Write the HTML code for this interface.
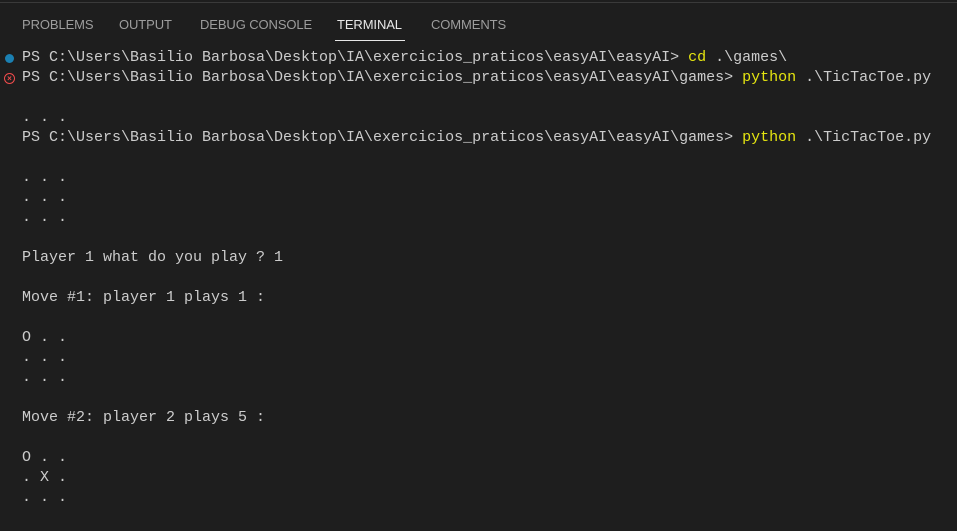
<!DOCTYPE html>
<html><head><style>
html,body{margin:0;padding:0;background:#1e1e1e;width:957px;height:531px;overflow:hidden}
.top{position:absolute;left:0;top:0;width:957px;height:2px;background:#1e1e1e;border-bottom:1px solid #3a3a3a}
.tabs{position:absolute;top:17px;left:22px;font-family:"Liberation Sans",sans-serif;font-size:13px;color:#9d9d9d;letter-spacing:-0.1px}
.tabs span{position:absolute;white-space:nowrap}
.ul{position:absolute;left:335px;top:40px;width:70px;height:1px;background:#e7e7e7}
.term{position:absolute;left:22px;top:48px;font-family:"Liberation Mono",monospace;font-size:15px;line-height:20px;color:#cccccc;white-space:pre}
.y{color:#e5e510}
.dot{position:absolute;left:5px;top:54px;width:9px;height:9px;border-radius:50%;background:#1b80b2}
.err{position:absolute;left:4px;top:73px;width:9px;height:9px;border-radius:50%;border:1px solid #f14c4c;color:#f14c4c;font:bold 8px/9px "Liberation Sans",sans-serif;text-align:center}
</style></head><body>
<div class="top"></div>
<div class="tabs">
<span style="left:0">PROBLEMS</span>
<span style="left:97px">OUTPUT</span>
<span style="left:178px">DEBUG CONSOLE</span>
<span style="left:315px;color:#e7e7e7">TERMINAL</span>
<span style="left:409px">COMMENTS</span>
</div>
<div class="ul"></div>
<div class="dot"></div>
<div class="err">×</div>
<div class="term">PS C:\Users\Basilio Barbosa\Desktop\IA\exercicios_praticos\easyAI\easyAI&gt; <span class="y">cd</span> .\games\
PS C:\Users\Basilio Barbosa\Desktop\IA\exercicios_praticos\easyAI\easyAI\games&gt; <span class="y">python</span> .\TicTacToe.py

. . .
PS C:\Users\Basilio Barbosa\Desktop\IA\exercicios_praticos\easyAI\easyAI\games&gt; <span class="y">python</span> .\TicTacToe.py

. . .
. . .
. . .

Player 1 what do you play ? 1

Move #1: player 1 plays 1 :

O . .
. . .
. . .

Move #2: player 2 plays 5 :

O . .
. X .
. . .</div>
</body></html>
